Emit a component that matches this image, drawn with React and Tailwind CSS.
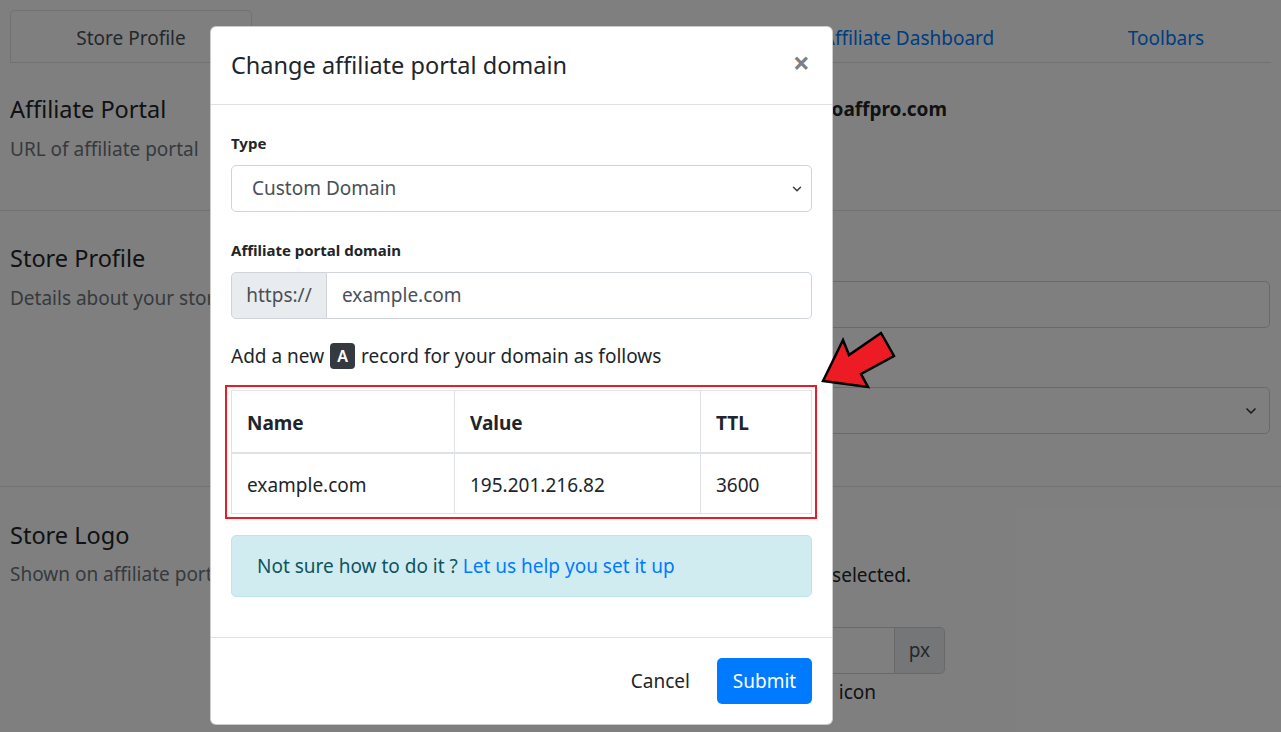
import { ChevronDown } from 'lucide-react'

const TABS = [
  { label: 'Store Profile', w: 'w-[242px]', active: true },
  { label: 'Payment Settings', w: 'w-[252px]' },
  { label: 'Signup Settings', w: 'w-[252px]' },
  { label: 'Affiliate Dashboard', w: 'w-[305px]' },
  { label: 'Toolbars', w: 'w-[210px]' },
]

function Background() {
  return (
    <div className="min-h-[732px] bg-white px-[10px] pt-[10px] text-[19px] text-[#212529]">
      {/* Tabs */}
      <div className="flex border-b border-[#dee2e6]">
        {TABS.map((t) => (
          <div
            key={t.label}
            className={`${t.w} h-[52px] pt-[4px] flex items-center justify-center ${
              t.active
                ? 'border border-[#dee2e6] border-b-white rounded-t-[5px] -mb-px text-[#495057]'
                : 'text-[#007bff]'
            }`}
          >
            {t.label}
          </div>
        ))}
      </div>

      {/* Affiliate portal */}
      <div className="-mx-[10px] px-[10px] h-[148px] border-b border-[#dee2e6] grid grid-cols-[430px_1fr] pt-[27px]">
        <div>
          <h4 className="text-[23.5px] leading-[38px] mb-[6px]">Affiliate Portal</h4>
          <p className="text-[#6c757d] leading-[30px]">URL of affiliate portal</p>
        </div>
        <div className="pt-[4px]">
          <span className="block w-[507px] text-right font-bold leading-[30px]">https://mystore.goaffpro.com</span>
        </div>
      </div>

      {/* Store profile */}
      <div className="-mx-[10px] px-[10px] h-[276px] border-b border-[#dee2e6] grid grid-cols-[430px_1fr] pt-[28px]">
        <div>
          <h4 className="text-[23.5px] leading-[38px] mb-[6px]">Store Profile</h4>
          <p className="text-[#6c757d] leading-[30px]">Details about your store</p>
        </div>
        <div className="pt-[2px]">
          <label className="block font-bold text-[15px] leading-[24px] mb-[16px]">Store name</label>
          <div className="h-[47px] border border-[#ced4da] rounded-[5px] mr-[1px]" />
          <label className="block font-bold text-[15px] leading-[24px] mt-[22px] mb-[13px]">Currency</label>
          <div className="h-[47px] border border-[#ced4da] rounded-[5px] mr-[1px] flex items-center justify-end pr-[10px]">
            <ChevronDown size={16} strokeWidth={2.5} className="text-[#343a40]" />
          </div>
        </div>
      </div>

      {/* Store logo */}
      <div className="-mx-[10px] px-[10px] grid grid-cols-[430px_1fr] pt-[29px]">
        <div>
          <h4 className="text-[23.5px] leading-[38px] mb-[5px]">Store Logo</h4>
          <p className="text-[#6c757d] leading-[30px]">Shown on affiliate portal</p>
        </div>
        <div className="pt-[44px]">
          <p className="w-[471px] text-right leading-[30px]">Your logo is used when a logo is selected.</p>
          <div className="mt-[37px] flex w-[505px] h-[47px]">
            <div className="flex-1 border border-[#ced4da] rounded-l-[5px]" />
            <div className="w-[50px] border border-l-0 border-[#ced4da] bg-[#e9ecef] rounded-r-[5px] flex items-center justify-center text-[#495057]">
              px
            </div>
          </div>
          <p className="leading-[30px] mt-[3px] w-[436px] text-right">Width of the logo icon</p>
        </div>
      </div>
    </div>
  )
}

function Arrow() {
  return (
    <svg
      className="absolute left-[815px] top-[325px]"
      width="90"
      height="70"
      viewBox="0 0 90 70"
    >
      <polygon
        points="8,56 28,15 34,30 66,8 79,31 46,49 53,62"
        fill="#ed1c24"
        stroke="#000"
        strokeWidth="2.5"
        strokeLinejoin="miter"
      />
    </svg>
  )
}

function Modal() {
  return (
    <div className="absolute left-[210px] top-[26px] w-[623px] bg-white rounded-[6px] border border-black/20 text-[19px] text-[#212529]">
      {/* Header */}
      <div className="h-[78px] flex items-center justify-between px-[20px] border-b border-[#dee2e6]">
        <h5 className="text-[23.5px] leading-[30px] -mt-[2px]">Change affiliate portal domain</h5>
        <button className="text-[30px] font-bold leading-none text-black/50 -mt-[5px] pr-[2px]">×</button>
      </div>

      {/* Body */}
      <div className="px-[20px] pt-[26px] pb-[20px]">
        <label className="block text-[15px] font-bold leading-[24px] mb-[10px]">Type</label>
        <div className="h-[47px] border border-[#ced4da] rounded-[5px] flex items-center justify-between pl-[20px] pr-[7px] text-[#495057]">
          <span>Custom Domain</span>
          <ChevronDown size={14} strokeWidth={2.5} className="text-[#343a40]" />
        </div>

        <label className="block text-[15px] font-bold leading-[24px] mt-[26px] mb-[10px]">Affiliate portal domain</label>
        <div className="flex h-[47px]">
          <div className="w-[96px] bg-[#e9ecef] border border-[#ced4da] rounded-l-[5px] flex items-center justify-center text-[#495057]">
            https://
          </div>
          <div className="flex-1 border border-l-0 border-[#ced4da] rounded-r-[5px] flex items-center pl-[15px] text-[#495057]">
            example.com
          </div>
        </div>

        <p className="mt-[22px] leading-[30px] flex items-center">
          Add a new
          <span className="mx-[6px] w-[25px] h-[26px] rounded-[4px] bg-[#343a40] text-white text-[16px] font-semibold flex items-center justify-center">
            A
          </span>
          record for your domain as follows
        </p>

        <div className="mt-[14px] -ml-[6px] -mr-[5px] border-2 border-[#ed1c24] pl-[4px] pr-[3px] py-[3px]">
          <table className="w-full border-collapse border border-[#dee2e6]">
            <thead>
              <tr className="h-[62px] border-b-2 border-[#dee2e6]">
                <th className="w-[223px] text-left font-bold px-[15px] pt-[4px] border border-[#dee2e6]">Name</th>
                <th className="w-[246px] text-left font-bold px-[15px] pt-[4px] border border-[#dee2e6]">Value</th>
                <th className="text-left font-bold px-[15px] pt-[4px] border border-[#dee2e6]">TTL</th>
              </tr>
            </thead>
            <tbody>
              <tr className="h-[61px]">
                <td className="px-[15px] pt-[3px] border border-[#dee2e6]">example.com</td>
                <td className="px-[15px] pt-[3px] border border-[#dee2e6]">195.201.216.82</td>
                <td className="px-[15px] pt-[3px] border border-[#dee2e6]">3600</td>
              </tr>
            </tbody>
          </table>
        </div>

        <div className="mt-[16px] mb-[20px] h-[62px] bg-[#d1ecf1] border border-[#bee5eb] rounded-[5px] px-[25px] flex items-center text-[#0c5460]">
          Not sure how to do it ?&nbsp;<span className="text-[#007bff]">Let us help you set it up</span>
        </div>
      </div>

      {/* Footer */}
      <div className="border-t border-[#dee2e6] h-[87px] flex items-center justify-end gap-[12px] px-[20px]">
        <button className="px-[15px] h-[46px] text-[#212529]">Cancel</button>
        <button className="w-[95px] h-[46px] bg-[#007bff] text-white rounded-[5px]">Submit</button>
      </div>
    </div>
  )
}

export default function App() {
  return (
    <div className="relative w-[1281px] h-[732px] overflow-hidden font-['Noto_Sans','Open_Sans',sans-serif]">
      <Background />
      <div className="absolute inset-0 bg-black/50" />
      <Modal />
      <Arrow />
    </div>
  )
}
